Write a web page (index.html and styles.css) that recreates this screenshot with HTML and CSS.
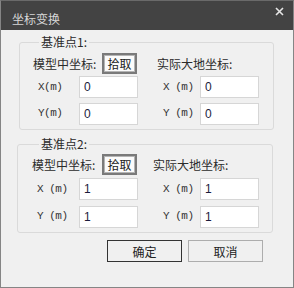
FILE: index.html
```html
<!doctype html>
<html lang="zh-CN">
<head>
    <meta charset="UTF-8">
    <title>坐标变换</title>
    <link rel="stylesheet" href="styles.css">
</head>
<body>
<div class="dialog">
    <div class="titlebar">
        <span class="title">坐标变换</span>
        <svg class="close" width="9" height="9" viewBox="0 0 9 9">
            <path d="M1 1L8 8M8 1L1 8" stroke="#e6e6e6" stroke-width="1.6"/>
        </svg>
    </div>
    <div class="content">
        <fieldset class="group group-1">
            <legend>基准点1:</legend>
            <div class="grid">
                <div class="head-left">
                    <span>模型中坐标:</span>
                    <button class="pick">拾取</button>
                </div>
                <div class="head-right">实际大地坐标:</div>
                <label class="axis">X(m)</label>
                <input class="field" value="0">
                <label class="axis axis-right">X (m)</label>
                <input class="field field-right" value="0">
                <label class="axis row-2">Y(m)</label>
                <input class="field row-2" value="0">
                <label class="axis axis-right row-2">Y (m)</label>
                <input class="field field-right row-2" value="0">
            </div>
        </fieldset>
        <fieldset class="group group-2">
            <legend>基准点2:</legend>
            <div class="grid">
                <div class="head-left">
                    <span>模型中坐标:</span>
                    <button class="pick">拾取</button>
                </div>
                <div class="head-right">实际大地坐标:</div>
                <label class="axis">X (m)</label>
                <input class="field" value="1">
                <label class="axis axis-right">X (m)</label>
                <input class="field field-right" value="1">
                <label class="axis row-2">Y (m)</label>
                <input class="field row-2" value="1">
                <label class="axis axis-right row-2">Y (m)</label>
                <input class="field field-right row-2" value="1">
            </div>
        </fieldset>
        <div class="actions">
            <button class="btn btn-ok">确定</button>
            <button class="btn">取消</button>
        </div>
    </div>
</div>
</body>
</html>
```

FILE: styles.css
```css
html, body {
    margin: 0;
    padding: 0;
    background: #f0f0f0;
}

.dialog {
    width: 294px;
    height: 288px;
    box-sizing: border-box;
    border: 1px solid #858585;
    border-top-color: #6a6a6a;
    background: #f0f0f0;
    font-family: "Noto Sans CJK SC", sans-serif;
    font-size: 12px;
    color: #2b2b2b;
}

.titlebar {
    height: 29px;
    background: #434343;
    display: flex;
    align-items: flex-start;
    justify-content: space-between;
    padding: 0 9px 0 11px;
}

.title {
    color: #d6d6d6;
    font-size: 12px;
    line-height: 14px;
    margin-top: 11px;
}

.close {
    margin-top: 6px;
}

.content {
    padding-top: 5px;
}

.group {
    margin: 0;
    padding: 0;
    border: 1px solid #dadada;
    border-radius: 3px;
}

.group legend {
    margin-left: 6px;
    padding: 0 2px;
    line-height: 14px;
    font-size: 12px;
}

.group-1 {
    margin-left: 18px;
    width: 255px;
    box-sizing: border-box;
    padding: 4px 0 7px 13px;
}

.group-2 {
    margin-left: 16px;
    margin-top: 7px;
    width: 256px;
    box-sizing: border-box;
    padding: 3px 0 7px 15px;
}

.grid {
    display: grid;
    grid-template-columns: 46px 59px 15px 47px 59px;
    grid-template-rows: 21px 22px 22px;
    row-gap: 2px;
}

.group-2 .grid {
    row-gap: 3px;
}

.row-2 {
    margin-top: 3px;
}

.head-left {
    grid-column: 1 / 3;
    display: flex;
    align-items: center;
    justify-content: space-between;
    padding-right: 1px;
}

.group-2 .head-left {
    margin-left: -1px;
}

.head-right {
    grid-column: 4 / 6;
    display: flex;
    align-items: center;
    padding-left: 4px;
}

.group-2 .head-right {
    padding-left: 0;
}

.pick {
    width: 35px;
    height: 21px;
    box-sizing: border-box;
    padding: 0;
    border: 2px solid #7a7a7a;
    box-shadow: inset 0 0 0 1px #b4b4b4;
    background: #fbfbfb;
    font-family: "Noto Sans CJK SC", sans-serif;
    font-size: 12px;
    color: #222;
}

.axis {
    grid-column: 1;
    display: flex;
    align-items: center;
    padding-left: 5px;
    font-family: "Liberation Mono", "Noto Sans CJK SC", monospace;
    font-size: 11px;
    color: #333;
    letter-spacing: -0.5px;
}

.group-2 .axis {
    padding-left: 4px;
}

.axis-right,
.group-2 .axis-right {
    grid-column: 4;
    padding-left: 10px;
}

.field {
    grid-column: 2;
    width: 59px;
    height: 22px;
    box-sizing: border-box;
    margin: 0;
    border: 1px solid #d6d6d6;
    background: #fff;
    padding: 0 4px;
    font-family: "Liberation Sans", sans-serif;
    font-size: 12px;
    color: #1c1c3c;
    outline: none;
}

.field.row-2 {
    margin-top: 3px;
}

.field-right {
    grid-column: 5;
}

.actions {
    display: flex;
    justify-content: flex-end;
    gap: 6px;
    margin-top: 7px;
    padding-right: 30px;
}

.btn {
    width: 75px;
    height: 22px;
    box-sizing: border-box;
    border: 1px solid #adadad;
    background: #f0f0f0;
    font-family: "Noto Sans CJK SC", sans-serif;
    font-size: 12px;
    color: #222;
    padding: 0;
}

.btn-ok {
    border-color: #333;
}
```
